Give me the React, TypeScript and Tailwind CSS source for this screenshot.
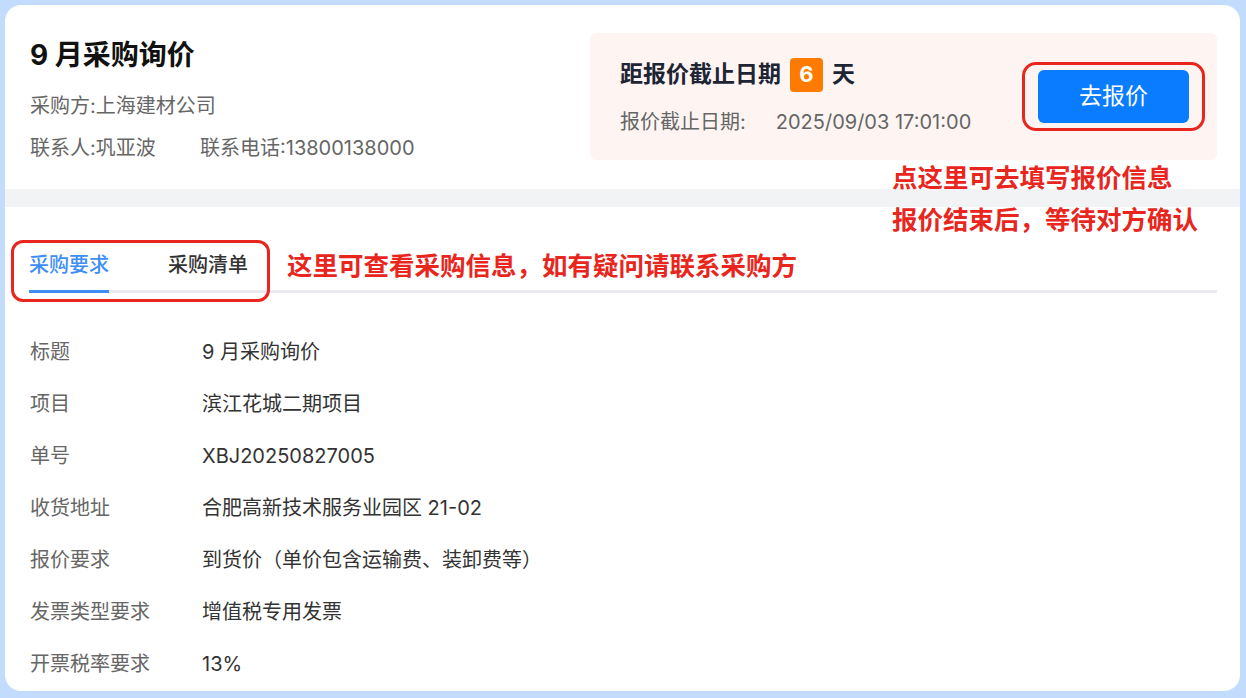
const rows: { label: string; value: string }[] = [
  { label: "标题", value: "9 月采购询价" },
  { label: "项目", value: "滨江花城二期项目" },
  { label: "单号", value: "XBJ20250827005" },
  { label: "收货地址", value: "合肥高新技术服务业园区 21-02" },
  { label: "报价要求", value: "到货价（单价包含运输费、装卸费等）" },
  { label: "发票类型要求", value: "增值税专用发票" },
  { label: "开票税率要求", value: "13%" },
]

const App = () => {
  return (
    <div className="w-[1246px] h-[698px] bg-[#c3dcfd] pt-[5px] pl-[5px] pr-[6px] pb-[7px] font-['Inter','Noto_Sans_CJK_SC',sans-serif]">
      <div className="relative h-full bg-white rounded-[16px] overflow-hidden">
        {/* header */}
        <div className="flex justify-between pl-[25px] pr-[23px] pt-[28px] h-[184px]">
          <div className="mt-[4px]">
            <h1 className="text-[28px] leading-[36px] font-bold text-[#111]">9 月采购询价</h1>
            <p className="mt-[19px] text-[20px] leading-[28px] text-[#666]">采购方:上海建材公司</p>
            <div className="mt-[14px] flex text-[20px] leading-[28px] text-[#666]">
              <span className="w-[170px]">联系人:巩亚波</span>
              <span>联系电话:13800138000</span>
            </div>
          </div>

          <div className="w-[627px] h-[127px] bg-[#fef5f3] rounded-md flex items-center justify-between pl-[30px] pr-[12px]">
            <div>
              <div className="flex items-center h-[34px]">
                <span className="text-[23px] font-bold text-[#1d2433]">距报价截止日期</span>
                <span className="ml-[9px] w-[33px] h-[34px] rounded-[4px] bg-[#ff7a00] text-white text-[22px] font-bold flex items-center justify-center">6</span>
                <span className="ml-[9px] text-[23px] font-bold text-[#1d2433]">天</span>
              </div>
              <div className="mt-[16px] flex text-[20px] leading-[28px] text-[#666]">
                <span>报价截止日期:</span>
                <span className="ml-[30px]">2025/09/03 17:01:00</span>
              </div>
            </div>
            <div className="border-[3px] border-[#e8261d] rounded-[14px] px-[13px] py-[5px]">
              <button className="w-[151px] h-[53px] rounded-[6px] bg-[#0a7cff] text-white text-[23px]">去报价</button>
            </div>
          </div>
        </div>

        <div className="h-[18px] bg-[#f2f3f5]" />

        {/* tabs */}
        <div className="relative pt-[44px] pl-[24px] pr-[23px]">
          <div className="flex gap-[59px] border-b-[3px] border-[#e9ebef] text-[20px] leading-[28px]">
            <div className="pb-[11px] -mb-[3px] border-b-[3px] border-[#3d8ef7] text-[#3d8ef7] font-medium">采购要求</div>
            <div className="pb-[11px] text-[#333] font-medium">采购清单</div>
          </div>
          <div className="absolute left-[6px] top-[33px] w-[259px] h-[62px] border-[3px] border-[#e8261d] rounded-[12px]" />
          <div className="absolute left-[282px] top-[38px] text-[25.5px] leading-[42px] font-bold text-[#e8261d]">
            这里可查看采购信息，如有疑问请联系采购方
          </div>
        </div>

        {/* rows */}
        <div className="mt-[33px] pl-[25px] text-[20px]">
          {rows.map((r) => (
            <div key={r.label} className="flex items-center h-[52px]">
              <span className="w-[172px] text-[#666]">{r.label}</span>
              <span className="text-[#333]">{r.value}</span>
            </div>
          ))}
        </div>

        <div className="absolute left-[887px] top-[152px] text-[25.5px] leading-[42px] font-bold text-[#e8261d]">
          <p>点这里可去填写报价信息</p>
          <p>报价结束后，等待对方确认</p>
        </div>
      </div>
    </div>
  )
}

export default App
